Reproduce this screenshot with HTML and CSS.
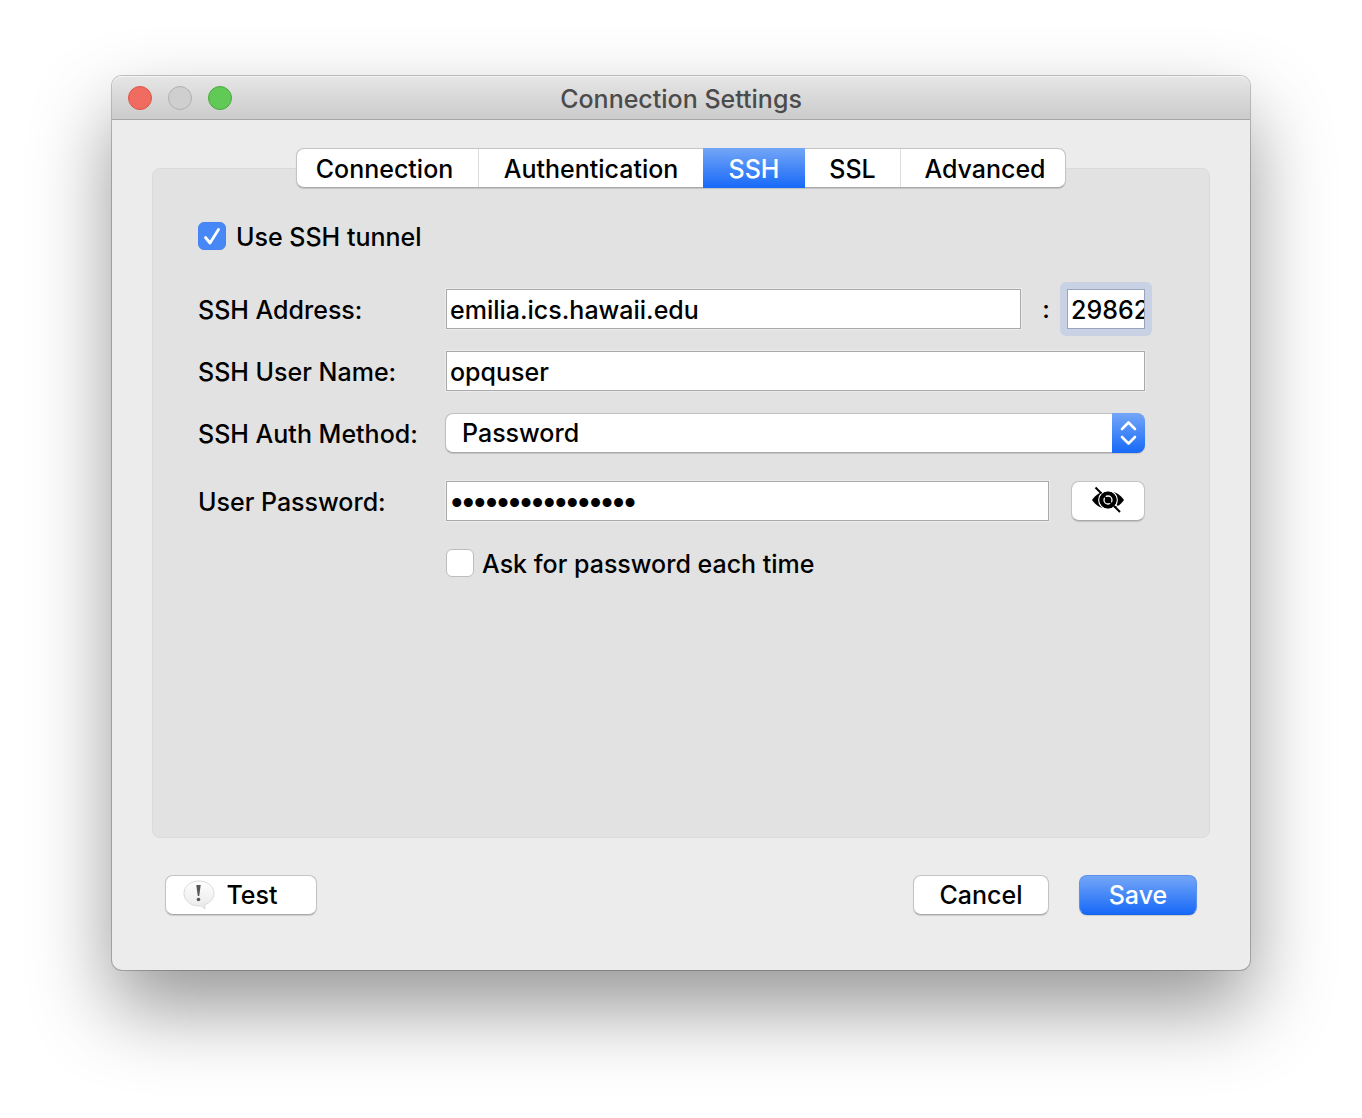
FILE: index.html
```html
<!DOCTYPE html>
<html lang="en">
<head>
<meta charset="utf-8">
<title>Connection Settings</title>
<link rel="stylesheet" href="styles.css">
</head>
<body>
<main class="window">
  <header class="titlebar">
    <div class="lights">
      <button class="light light-close" type="button" aria-label="Close"></button>
      <button class="light light-minimize" type="button" aria-label="Minimize" disabled></button>
      <button class="light light-zoom" type="button" aria-label="Zoom"></button>
    </div>
    <h1 class="title">Connection Settings</h1>
  </header>

  <form class="content">
    <div class="tabs" role="tablist">
      <button class="tab tab-connection" type="button" role="tab">Connection</button>
      <button class="tab tab-authentication" type="button" role="tab">Authentication</button>
      <button class="tab tab-ssh" type="button" role="tab" aria-selected="true">SSH</button>
      <button class="tab tab-ssl" type="button" role="tab">SSL</button>
      <button class="tab tab-advanced" type="button" role="tab">Advanced</button>
    </div>

    <section class="panel" role="tabpanel" aria-label="SSH">
      <label class="check">
        <input class="checkbox" type="checkbox" checked>
        <span class="check-text">Use SSH tunnel</span>
      </label>

      <div class="fields">
        <label class="label" for="address">SSH Address:</label>
        <div class="control address">
          <input class="field" id="address" type="text" value="emilia.ics.hawaii.edu">
          <span class="colon">:</span>
          <input class="field port" type="text" value="29862" aria-label="SSH port">
        </div>

        <label class="label" for="user">SSH User Name:</label>
        <div class="control">
          <input class="field" id="user" type="text" value="opquser">
        </div>

        <label class="label" for="method">SSH Auth Method:</label>
        <div class="control popup">
          <select class="select" id="method">
            <option>Password</option>
            <option>Private Key</option>
          </select>
          <svg class="arrows" width="33" height="40" viewBox="0 0 33 40" aria-hidden="true">
            <path d="M10 16l6.500-6.500L23 16M10 24l6.500 6.500L23 24" fill="none" stroke="#fff" stroke-width="2.600" stroke-linecap="round" stroke-linejoin="round"/>
          </svg>
        </div>

        <label class="label label-password" for="password">User Password:</label>
        <div class="control password">
          <input class="field secret" id="password" type="password" value="opqpassword12345">
          <button class="button reveal" type="button" aria-label="Show password">
            <svg width="36" height="30" viewBox="0 0 36 30" aria-hidden="true">
              <path d="M2 14C6 8 11 5.500 18 5.500S30 8 34 14C30 20 25 22.500 18 22.500S6 20 2 14z"/>
              <circle cx="18" cy="14" r="9.200" fill="none" stroke="#fff" stroke-width="1.400"/>
              <circle cx="18" cy="14" r="8.600"/>
              <circle cx="18" cy="14" r="4" fill="none" stroke="#fff" stroke-width="1.300"/>
              <path d="M13.500 9.500l3 3M19.500 15.500l3 3" stroke="#000" stroke-width="1.500"/>
              <path d="M8 1l5 5M26 19l5 5" stroke="#fff" stroke-width="1.200"/>
              <path d="M5.500 1.500l6 6M24 20l6 6" stroke="#000" stroke-width="2"/>
            </svg>
          </button>
        </div>

        <label class="check ask">
          <input class="checkbox" type="checkbox">
          <span class="check-text">Ask for password each time</span>
        </label>
      </div>
    </section>

    <footer class="actions">
      <button class="button test" type="button">
        <svg width="34" height="32" viewBox="0 0 34 32" aria-hidden="true">
          <defs>
            <linearGradient id="bubble" x1="0" y1="0" x2="0" y2="1">
              <stop offset="0" stop-color="#fff"/>
              <stop offset="1" stop-color="#e9e9e9"/>
            </linearGradient>
          </defs>
          <path d="M17 2C8.500 2 2 7.500 2 14.500S8.500 27 17 27l2-.2 4 3-.5-4C28 23.500 32 20 32 14.500 32 7.500 25.500 2 17 2z" fill="url(#bubble)" stroke="#dadada" stroke-width="1"/>
          <path d="M14.300 6h4.400l-1.500 11h-1.400z" fill="#555"/>
          <circle cx="16.500" cy="20.500" r="1.800" fill="#555"/>
        </svg>
        <span>Test</span>
      </button>
      <button class="button cancel" type="button">Cancel</button>
      <button class="button save" type="submit">Save</button>
    </footer>
  </form>
</main>
</body>
</html>
```
FILE: styles.css
```css
* {
  box-sizing: border-box;
}

body {
  margin: 0;
  padding: 76px 112px 148px;
  background: #fff;
  color: #000;
  font: 500 25px/32px Inter, "Liberation Sans", sans-serif;
}

button,
input,
select {
  margin: 0;
  font: inherit;
  color: inherit;
}

.window {
  border-radius: 10px;
  background: #ececec;
  box-shadow: 0 0 0 1px rgba(0, 0, 0, 0.22), 0 38px 80px rgba(0, 0, 0, 0.41);
}

.titlebar {
  display: grid;
  grid-template-columns: 1fr auto 1fr;
  align-items: center;
  height: 44px;
  padding: 0 16px;
  border-bottom: 1px solid #a6a6a6;
  border-radius: 10px 10px 0 0;
  background: linear-gradient(#e6e6e6, #cbcbcb);
  box-shadow: inset 0 1px #f4f4f4;
}

.lights {
  display: flex;
  gap: 16px;
}

.light {
  width: 24px;
  height: 24px;
  padding: 0;
  border: 1px solid #b0b0b0;
  border-radius: 50%;
  background: #cfcfcf;
}

.light-close {
  border-color: #de5448;
  background: #f06c60;
}

.light-zoom {
  border-color: #4aa93c;
  background: #61c955;
}

.title {
  margin: 0;
  padding-top: 2px;
  color: #4b4b4b;
  font-size: 25px;
  font-weight: 500;
}

.content {
  padding: 28px 40px 55px;
}

.tabs {
  position: relative;
  z-index: 1;
  display: flex;
  width: fit-content;
  height: 40px;
  margin: 0 auto -20px;
  border: 1px solid #c4c4c4;
  border-bottom-color: #a9a9a9;
  border-radius: 8px;
  background: #fff;
  box-shadow: 0 1px 1px rgba(0, 0, 0, 0.14);
}

.tab {
  padding: 2px 0 0;
  border: 0;
  background: none;
}

.tab-connection {
  width: 181px;
  padding-right: 6px;
}

.tab-authentication {
  width: 225px;
  border-left: 1px solid #dcdcdc;
}

.tab-ssh {
  width: 102px;
  margin: -1px 0;
  background: linear-gradient(#74a6f7, #1769f8);
  color: #fff;
}

.tab-ssl {
  width: 95px;
}

.tab-advanced {
  width: 165px;
  padding-left: 4px;
  border-left: 1px solid #dcdcdc;
}

.panel {
  min-height: 670px;
  padding: 53px 64px 40px 45px;
  border: 1px solid #dadada;
  border-radius: 8px;
  background: #e2e2e2;
}

.check {
  display: flex;
  align-items: center;
  gap: 10px;
  width: fit-content;
  height: 28px;
}

.check-text {
  padding-top: 2px;
}

.checkbox {
  flex: none;
  width: 28px;
  height: 28px;
  border: 1px solid #bdbdbd;
  border-radius: 6px;
  background: #fff;
  appearance: none;
}

.checkbox:checked {
  border-color: #4584f0;
  background: #4787f6 url("data:image/svg+xml,%3Csvg xmlns='http://www.w3.org/2000/svg' viewBox='0 0 26 26'%3E%3Cpath d='M6.500 14.500l4.500 5.500L19.500 6.500' fill='none' stroke='white' stroke-width='2.800' stroke-linecap='round' stroke-linejoin='round'/%3E%3C/svg%3E") center / 26px 26px;
}

.fields {
  display: grid;
  grid-template-columns: 248px 1fr;
  row-gap: 22px;
  align-items: center;
  margin-top: 39px;
}

.label {
  padding-top: 2px;
  white-space: nowrap;
}

.control {
  display: flex;
  align-items: center;
  min-width: 0;
}

.field {
  flex: 1;
  min-width: 0;
  height: 40px;
  padding: 2px 3px 0;
  border: 1px solid #a9a9a9;
  border-radius: 0;
  outline: 1px solid #ececec;
  background: #fff;
}

.secret {
  padding: 4px 4px 0;
  font: 33px/34px "Liberation Sans", sans-serif;
}

.colon {
  width: 46px;
  padding-left: 4px;
  text-align: center;
}

.port {
  flex: 0 0 78px;
  padding-right: 0;
  border-color: #98a5bd;
  outline: 0;
  box-shadow: 0 0 0 7px #c9d2e5;
  clip-path: inset(-7px round 6px);
}

.popup {
  display: grid;
  margin-left: -1px;
}

.select,
.arrows {
  grid-area: 1 / 1;
}

.select {
  width: 100%;
  height: 40px;
  padding: 0 40px 0 16px;
  border: 1px solid #c0c0c0;
  border-bottom-color: #a9a9a9;
  border-radius: 8px;
  background: #fff;
  box-shadow: 0 1px 1px rgba(0, 0, 0, 0.14);
  appearance: none;
}

.arrows {
  justify-self: end;
  border-radius: 0 8px 8px 0;
  background: linear-gradient(#74a6f7, #1769f8);
  pointer-events: none;
}

.password,
.label-password,
.ask {
  margin-top: 6px;
}

.password {
  gap: 22px;
}

.button {
  display: flex;
  align-items: center;
  justify-content: center;
  height: 40px;
  padding: 0;
  border: 1px solid #c4c4c4;
  border-bottom-color: #a9a9a9;
  border-radius: 8px;
  background: #fff;
  box-shadow: 0 1px 1px rgba(0, 0, 0, 0.14);
}

.reveal {
  width: 74px;
}

.ask {
  grid-column: 2;
  gap: 8px;
}

.actions {
  display: flex;
  gap: 30px;
  padding: 37px 13px 0;
}

.test {
  gap: 10px;
  width: 152px;
  margin-right: auto;
  padding-right: 22px;
}

.cancel {
  width: 136px;
}

.save {
  width: 118px;
  border-color: #5a90ee;
  border-bottom-color: #1762e6;
  background: linear-gradient(#74a6f7, #1769f8);
  color: #fff;
}
```
